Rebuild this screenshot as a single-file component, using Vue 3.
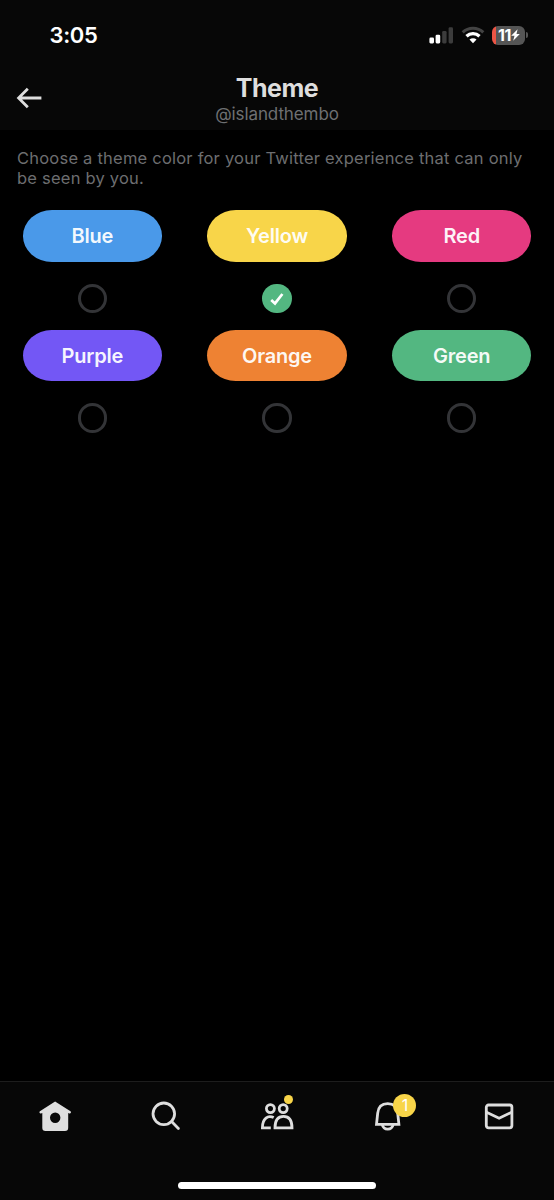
<script setup>
const themes = [
  { name: 'Blue', color: '#4a99e9' },
  { name: 'Yellow', color: '#f8d549', selected: true },
  { name: 'Red', color: '#e53a80' },
  { name: 'Purple', color: '#7357f5' },
  { name: 'Orange', color: '#ee8233' },
  { name: 'Green', color: '#53b781' },
]
</script>

<template>
  <div class="screen">
    <header class="top">
      <div class="status">
        <span class="time">3:05</span>
        <div class="indicators">
          <svg class="signal" width="26" height="18" viewBox="0 0 26 18">
            <rect x="0.4" y="11.6" width="4.6" height="5.8" rx="1.3" fill="#fff" />
            <rect x="6.6" y="8.8" width="4.6" height="8.6" rx="1.3" fill="#fff" />
            <rect x="13.2" y="5" width="4.4" height="12.4" rx="1.3" fill="#3c3c3c" />
            <rect x="19.6" y="1.2" width="4.4" height="16.2" rx="1.3" fill="#3c3c3c" />
          </svg>
          <svg class="wifi" width="24" height="18" viewBox="0 0 24 18" fill="none">
            <path d="M1.7 6.3a14.8 14.8 0 0 1 20.6 0" stroke="#434343" stroke-width="3" />
            <path d="M5.5 10.2a9.4 9.4 0 0 1 13 0" stroke="#fff" stroke-width="3.3" />
            <path d="M12 17.2 8.5 13.6a5 5 0 0 1 7 0z" fill="#fff" />
          </svg>
          <div class="battery">
            <span class="level">11</span>
            <svg width="9" height="12" viewBox="0 0 9 12"><path d="M6.6.2.2 6.8h3.3L2.2 11.8 8.8 5.1H5.5z" fill="#fff" /></svg>
          </div>
          <span class="cap"></span>
        </div>
      </div>
      <div class="nav">
        <svg class="back" width="27" height="24" viewBox="0 0 27 24" fill="none" stroke="#dedede" stroke-width="2.8">
          <path d="M25.4 12H3M11.8 2.8 2.6 12l9.2 9.2" />
        </svg>
        <div class="heading">
          <h1>Theme</h1>
          <p>@islandthembo</p>
        </div>
      </div>
    </header>

    <main>
      <p class="intro">Choose a theme color for your Twitter experience that can only<br />be seen by you.</p>
      <div class="grid">
        <div v-for="t in themes" :key="t.name" class="option">
          <button class="pill" :style="{ background: t.color }">{{ t.name }}</button>
          <span class="radio" :class="{ on: t.selected }">
            <svg v-if="t.selected" width="16" height="16" viewBox="0 0 16 16" fill="none">
              <path d="M2.2 8.9 6 12.4 13.4 3" stroke="#fff" stroke-width="2.7" />
            </svg>
          </span>
        </div>
      </div>
    </main>

    <footer class="tabs">
      <div class="tab">
        <svg width="34" height="34" viewBox="0 0 34 34">
          <path fill="#dedede" fill-rule="evenodd" d="M17.1 2.6 32.5 12.3a1.2 1.2 0 0 1-1.1 2.1l-1.2-.5v14.800a3.200 3.200 0 0 1-3.200 3.200H7.500a3.200 3.200 0 0 1-3.200-3.200V13.900l-1.300.5a1.200 1.200 0 0 1-1.100-2.100zM17.200 13.600a5.200 5.200 0 1 0 0 10.400 5.200 5.200 0 0 0 0-10.400z" />
        </svg>
      </div>
      <div class="tab">
        <svg width="34" height="34" viewBox="0 0 34 34" fill="none" stroke="#dedede" stroke-width="2.8">
          <circle cx="14.8" cy="14.8" r="10.8" />
          <path d="m22.600 22.600 6.800 6.800" stroke-linecap="round" />
        </svg>
      </div>
      <div class="tab">
        <svg width="34" height="34" viewBox="0 0 34 34" fill="none" stroke="#dedede" stroke-width="2.8">
          <circle cx="10.400" cy="9.600" r="4" />
          <circle cx="23.200" cy="9.600" r="4" />
          <path d="M13.700 18.600C8 15.600 2.400 19.500 2.400 28.800h8.400" />
          <path d="M15 28.800c0-7.400 3.200-11.400 8.500-11.400S32 21.400 32 28.800z" />
        </svg>
        <span class="dot"></span>
      </div>
      <div class="tab">
        <svg width="34" height="34" viewBox="0 0 34 34" fill="none" stroke="#dedede" stroke-width="2.8">
          <path d="M5.500 25.400 6.700 14.200C7.300 7.800 11 4.600 16.700 4.600s9.400 3.200 10 9.600l1.200 11.200z" />
          <path d="M11.300 25.800c.7 3.100 2.900 4.400 5.400 4.400s4.700-1.300 5.400-4.400" />
        </svg>
        <span class="badge">1</span>
      </div>
      <div class="tab">
        <svg width="34" height="34" viewBox="0 0 34 34" fill="none" stroke="#dedede" stroke-width="2.8">
          <rect x="4.300" y="6" width="25.600" height="22.800" rx="2.200" />
          <path d="m4.500 13.200 12.600 6 12.600-6" />
        </svg>
      </div>
      <span class="home-bar"></span>
    </footer>
  </div>
</template>

<style scoped>
.screen {
  width: 554px;
  height: 1200px;
  display: flex;
  flex-direction: column;
  background: #000;
  font-family: Inter, "Liberation Sans", sans-serif;
  overflow: hidden;
}
.top { height: 130px; flex: none; background: #070707; }
.status {
  height: 70px;
  box-sizing: border-box;
  padding: 0 26px 0 49.5px;
  display: flex;
  justify-content: space-between;
  align-items: center;
}
.time { color: #fff; font-size: 22px; line-height: 26px; font-weight: 600; letter-spacing: -0.35px; }
.indicators { display: flex; align-items: center; }
.wifi { margin-left: 6px; }
.battery {
  width: 33px;
  height: 19px;
  margin-left: 7px;
  border-radius: 6px;
  display: flex;
  align-items: center;
  justify-content: center;
  background: linear-gradient(90deg, #ec5545 0 4px, #555 4px);
}
.level { color: #fff; font-size: 16px; line-height: 19px; font-weight: 700; letter-spacing: -0.3px; margin-left: 1px; }
.cap { width: 2px; height: 6px; margin-left: 1px; border-radius: 0 2px 2px 0; background: #555; }
.nav { position: relative; height: 60px; display: flex; justify-content: center; }
.back { position: absolute; left: 16px; top: 16px; }
.heading { text-align: center; }
h1 { margin: 3px 0 0; color: #dedede; font-size: 25px; line-height: 30px; font-weight: 700; letter-spacing: -0.5px; }
.heading p { margin: 1px 0 0; color: #6e7072; font-size: 17px; line-height: 20px; letter-spacing: -0.1px; }
main { flex: 1; }
.intro { margin: 18px 0 0 17px; color: #6d6e70; font-size: 16.5px; line-height: 20px; letter-spacing: 0.22px; white-space: nowrap; }
.grid { margin-top: 22.3px; display: grid; grid-template-columns: repeat(3, 1fr); row-gap: 16.5px; }
.option { display: flex; flex-direction: column; align-items: center; gap: 22px; }
.pill {
  width: 139.5px;
  height: 51.5px;
  padding: 0;
  border: 0;
  border-radius: 29px / 25.75px;
  color: rgba(255, 255, 255, 0.95);
  font: 600 20px/24px Inter, "Liberation Sans", sans-serif;
  letter-spacing: -0.2px;
}
.radio {
  box-sizing: border-box;
  width: 29.5px;
  height: 29.5px;
  border: 3px solid #333437;
  border-radius: 50%;
  display: flex;
  align-items: center;
  justify-content: center;
}
.radio.on { border: 0; background: #53b781; }
.tabs {
  position: relative;
  height: 119px;
  flex: none;
  box-sizing: border-box;
  border-top: 1px solid #1d1d1d;
  background: #070707;
  display: grid;
  grid-template-columns: repeat(5, 1fr);
}
.tab { position: relative; height: 34px; margin-top: 17px; display: flex; justify-content: center; }
.dot { position: absolute; left: 62px; top: -4px; width: 9px; height: 9px; border-radius: 50%; background: #f8d549; }
.badge {
  position: absolute;
  left: 61px;
  top: -5px;
  width: 23px;
  height: 23px;
  border-radius: 50%;
  background: #f8d549;
  color: #fff;
  font-size: 16px;
  line-height: 23px;
  text-align: center;
}
.home-bar { position: absolute; left: 178px; bottom: 11px; width: 198px; height: 7px; border-radius: 4px; background: #fff; }
</style>

<style>
body { background: #000; }
</style>
